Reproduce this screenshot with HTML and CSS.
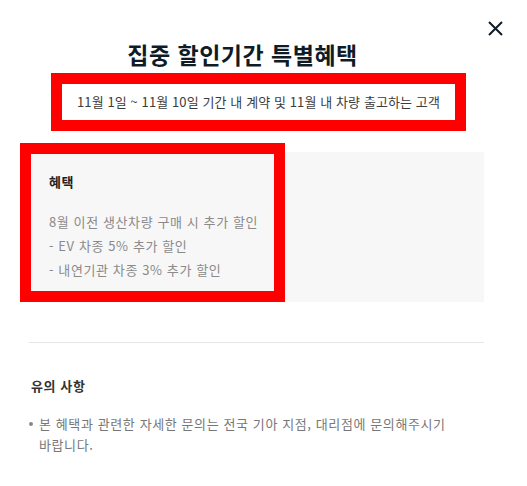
FILE: index.html
```html
<!DOCTYPE html>
<html lang="ko">
<head>
  <meta charset="UTF-8">
  <meta name="viewport" content="width=device-width, initial-scale=1.0">
  <title>집중 할인기간 특별혜택</title>
  <link rel="stylesheet" href="styles.css">
</head>
<body>
  <div class="modal">
    <button type="button" class="cerrar" aria-label="닫기">
      <svg width="15" height="15" viewBox="0 0 15 15">
        <path d="M1 1 L14 14 M14 1 L1 14" stroke="#0f1c27" stroke-width="2" fill="none"/>
      </svg>
    </button>

    <h2 class="titulo">집중 할인기간 특별혜택</h2>
    <p class="periodo">11월 1일 ~ 11월 10일 기간 내 계약 및 11월 내 차량 출고하는 고객</p>

    <div class="beneficio">
      <div class="marca"></div>
      <p class="beneficio-titulo">혜택</p>
      <ul class="beneficio-lista">
        <li>8월 이전 생산차량 구매 시 추가 할인</li>
        <li>- EV 차종 5% 추가 할인</li>
        <li>- 내연기관 차종 3% 추가 할인</li>
      </ul>
    </div>

    <hr class="divisor">

    <div class="aviso">
      <p class="aviso-titulo">유의 사항</p>
      <ul class="aviso-lista">
        <li>본 혜택과 관련한 자세한 문의는 전국 기아 지점, 대리점에 문의해주시기 바랍니다.</li>
      </ul>
    </div>
  </div>
</body>
</html>
```

FILE: styles.css
```css
body{
  margin: 0;
  background-color: white;
  font-family: "Noto Sans CJK KR", "Noto Sans", sans-serif;
  color: #333;
}
.modal{
  position: relative;
  padding: 38px 43px 0 29px;
}
.cerrar{
  position: absolute;
  top: 21px;
  right: 24px;
  width: 15px;
  height: 15px;
  margin: 0;
  padding: 0;
  border: 0;
  background: none;
  cursor: pointer;
}
.cerrar svg{
  display: block;
}
.titulo{
  margin: 0;
  padding-right: 28px;
  font-size: 23px;
  line-height: 32px;
  letter-spacing: 0.5px;
  font-weight: 700;
  color: #0f1c27;
  text-align: center;
}
.periodo{
  margin: 3px 18px 0 22px;
  padding: 10px 0;
  border: 11px solid #ff0000;
  font-size: 13px;
  line-height: 16px;
  letter-spacing: 0.1px;
  color: #3c3c3c;
  text-align: center;
}
.beneficio{
  position: relative;
  margin-top: 21px;
  padding: 20px 20px 20px 20px;
  background-color: #f7f7f7;
}
/* recuadro rojo encima del bloque */
.beneficio .marca{
  position: absolute;
  left: -9px;
  top: -9px;
  width: 243px;
  height: 137px;
  border: 11px solid #ff0000;
}
.beneficio-titulo{
  margin: 0;
  font-size: 13px;
  line-height: 20px;
  letter-spacing: 0.6px;
  font-weight: 700;
  color: #222;
}
.beneficio-lista{
  list-style: none;
  margin: 18px 0 0 0;
  padding: 0;
  font-size: 13px;
  line-height: 24px;
  letter-spacing: 0.6px;
  color: #8a8a8a;
}
.divisor{
  margin: 40px 0 0 0;
  border: 0;
  border-top: 1px solid #e6e6e6;
}
.aviso{
  padding-top: 33px;
}
.aviso-titulo{
  margin: 0 0 0 2px;
  font-size: 13px;
  line-height: 20px;
  letter-spacing: 0.6px;
  font-weight: 700;
  color: #333;
}
.aviso-lista{
  list-style: none;
  margin: 17px 0 0 0;
  padding: 0;
  font-size: 13px;
  line-height: 21px;
  letter-spacing: 0.6px;
  color: #777;
  word-break: keep-all;
}
.aviso-lista li{
  display: flex;
}
.aviso-lista li::before{
  content: "";
  flex-shrink: 0;
  width: 4px;
  height: 4px;
  margin: 9px 6px 0 0;
  border-radius: 50%;
  background-color: #888;
}
```
